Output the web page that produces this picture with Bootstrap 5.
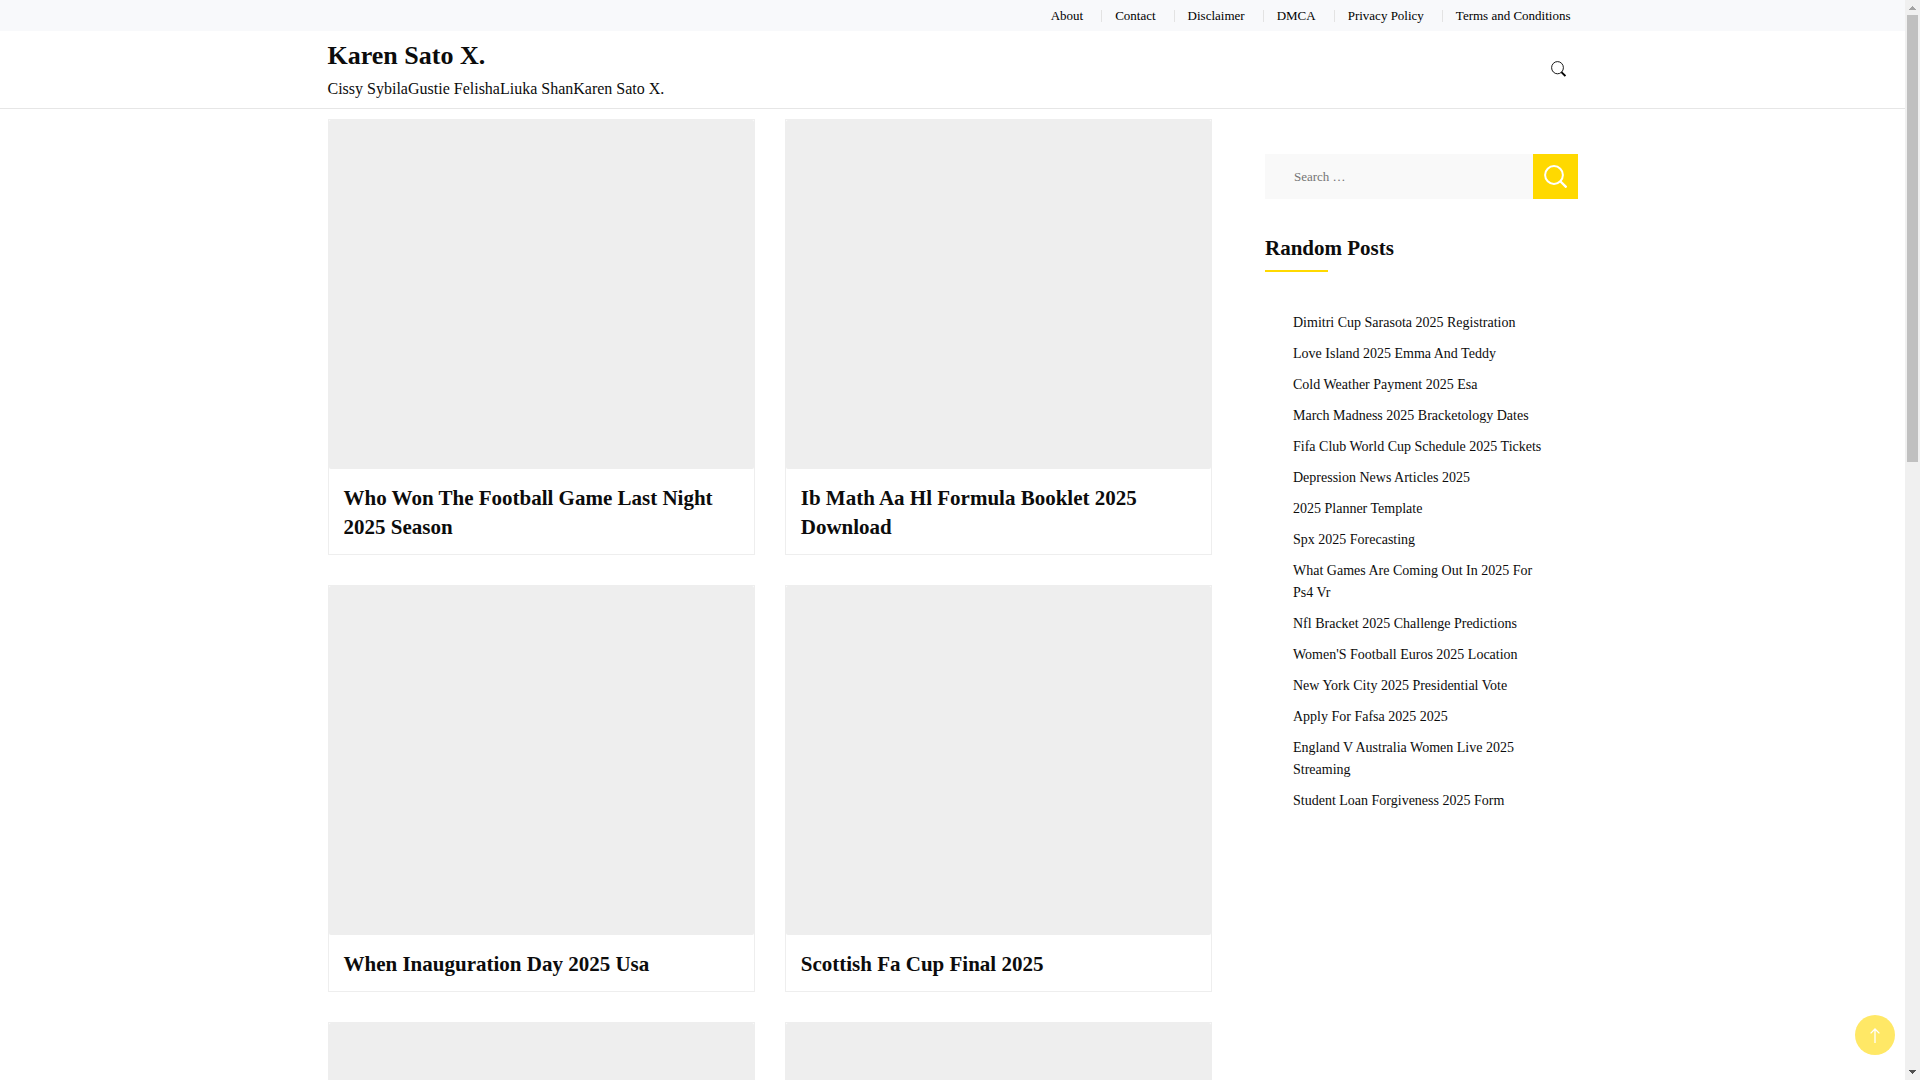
<!DOCTYPE html>
<html lang="en">
<head>
<meta charset="utf-8">
<meta name="viewport" content="width=device-width, initial-scale=1">
<title>Karen Sato X.</title>
<link href="https://cdn.jsdelivr.net/npm/bootstrap@5.3.0/dist/css/bootstrap.min.css" rel="stylesheet">
<style>
  html, body { height: 100%; overflow: hidden; }
  body { font-family: "Liberation Serif", "Times New Roman", serif; color: #0c0c0c; font-size: 16px; padding-right: 15px; background: #fff; }
  a { color: #0c0c0c; text-decoration: none; }
  a:hover { color: #c9a900; }
  .site-width { max-width: 1280px; padding-left: 15px; padding-right: 15px; }
  .top-strip { background: #f8f9fb; }
  .top-menu { font-size: 13px; line-height: 21px; padding: 5px 7px 5px 0; }
  .top-menu a { color: #000; }
  .top-menu li + li::before { content: ""; width: 1px; height: 12px; background: #e3e3e3; margin: 0 13px 0 18px; }
  .site-head { border-bottom: 1px solid #e6e6e6; padding: 8px 0 6px; }
  .site-name { font-size: 26px; line-height: 34px; font-weight: 700; }
  .tagline { line-height: 27px; padding-top: 2px; }
  .head-search { padding: 0 12px 1px; line-height: 0; color: #000; }
  .page-gap { gap: 53px; padding-top: 10px; }
  .post-row { --bs-gutter-x: 30px; --bs-gutter-y: 30px; }
  .post-card { border: 1px solid #eee; border-radius: 0; }
  .thumb { height: 349px; background: #eee; border-radius: 2px; }
  .post-title { font-size: 21px; line-height: 29px; font-weight: 700; padding: 15px 15px 12px; }
  .side-col { padding-top: 35px; }
  .find-box { font-size: 13px; height: 45px; border: 0; border-radius: 0; background: #f9f9f9; padding: 0 29px; }
  .find-box::placeholder { color: #757575; }
  .find-btn { width: 45px; height: 45px; border: 0; border-radius: 0; background: #ffd900; line-height: 0; }
  .side-title { font-size: 21px; line-height: 30px; font-weight: 700; margin-top: 34px; }
  .side-title::after { content: ""; display: block; width: 20%; height: 2px; background: #ffd900; margin-top: 7px; }
  .random-list { font-size: 14px; line-height: 22px; gap: 9px; padding: 0 28px; margin-top: 40px; }
  .to-top { right: 25px; bottom: 25px; width: 40px; height: 40px; background: #ffd900; opacity: .6; border: 0; line-height: 0; }
  .scroll-track { width: 15px; background: #f0f0f0; }
  .scroll-thumb { width: 11px; height: 447px; background: #c0c0c0; }
  .scroll-arrow { width: 15px; height: 15px; }
</style>
<script src="https://cdn.jsdelivr.net/npm/bootstrap@5.3.0/dist/js/bootstrap.bundle.min.js"></script>
</head>
<body>
<nav class="top-strip" aria-label="Top menu">
  <div class="container-fluid site-width">
    <ul class="top-menu list-unstyled d-flex flex-wrap justify-content-end mb-0">
      <li class="d-flex align-items-center"><a href="#">About</a></li>
      <li class="d-flex align-items-center"><a href="#">Contact</a></li>
      <li class="d-flex align-items-center"><a href="#">Disclaimer</a></li>
      <li class="d-flex align-items-center"><a href="#">DMCA</a></li>
      <li class="d-flex align-items-center"><a href="#">Privacy Policy</a></li>
      <li class="d-flex align-items-center"><a href="#">Terms and Conditions</a></li>
    </ul>
  </div>
</nav>
<header class="site-head">
  <div class="container-fluid site-width d-flex justify-content-between align-items-center">
    <div>
      <h1 class="site-name mb-0"><a href="#">Karen Sato X.</a></h1>
      <p class="tagline mb-0">Cissy SybilaGustie FelishaLiuka ShanKaren Sato X.</p>
    </div>
    <button type="button" class="head-search border-0 bg-transparent" aria-label="Open search">
      <svg width="15" height="18" viewBox="0 0 15 18" fill="none" stroke="currentColor"><ellipse cx="6.500" cy="6.700" rx="5.900" ry="6.100" stroke-width=".9"/><path d="M10.400 11.100l4 4" stroke-width="1.900"/></svg>
    </button>
  </div>
</header>
<div class="container-fluid site-width d-flex page-gap">
  <main class="flex-fill">
    <div class="row post-row">
      <div class="col-6"><article class="card post-card"><div class="thumb"></div><h2 class="post-title mb-0"><a href="#">Who Won The Football Game Last Night 2025 Season</a></h2></article></div>
      <div class="col-6"><article class="card post-card"><div class="thumb"></div><h2 class="post-title mb-0"><a href="#">Ib Math Aa Hl Formula Booklet 2025 Download</a></h2></article></div>
      <div class="col-6"><article class="card post-card"><div class="thumb"></div><h2 class="post-title mb-0"><a href="#">When Inauguration Day 2025 Usa</a></h2></article></div>
      <div class="col-6"><article class="card post-card"><div class="thumb"></div><h2 class="post-title mb-0"><a href="#">Scottish Fa Cup Final 2025</a></h2></article></div>
      <div class="col-6"><article class="card post-card"><div class="thumb"></div></article></div>
      <div class="col-6"><article class="card post-card"><div class="thumb"></div></article></div>
    </div>
  </main>
  <aside class="side-col w-25 flex-shrink-0">
    <form class="d-flex" role="search">
      <input type="search" class="form-control find-box" placeholder="Search …" aria-label="Search for">
      <button type="submit" class="find-btn flex-shrink-0 p-0" aria-label="Search">
        <svg width="23" height="23" viewBox="0 0 23 23" fill="none" stroke="#fff" stroke-width="2"><circle cx="10" cy="10" r="8.900"/><path d="M16.300 16.300l6.200 6.200" stroke-width="2.300"/></svg>
      </button>
    </form>
    <h2 class="side-title mb-0">Random Posts</h2>
    <ul class="random-list list-unstyled d-flex flex-column">
      <li><a href="#">Dimitri Cup Sarasota 2025 Registration</a></li>
      <li><a href="#">Love Island 2025 Emma And Teddy</a></li>
      <li><a href="#">Cold Weather Payment 2025 Esa</a></li>
      <li><a href="#">March Madness 2025 Bracketology Dates</a></li>
      <li><a href="#">Fifa Club World Cup Schedule 2025 Tickets</a></li>
      <li><a href="#">Depression News Articles 2025</a></li>
      <li><a href="#">2025 Planner Template</a></li>
      <li><a href="#">Spx 2025 Forecasting</a></li>
      <li><a href="#">What Games Are Coming Out In 2025 For Ps4 Vr</a></li>
      <li><a href="#">Nfl Bracket 2025 Challenge Predictions</a></li>
      <li><a href="#">Women'S Football Euros 2025 Location</a></li>
      <li><a href="#">New York City 2025 Presidential Vote</a></li>
      <li><a href="#">Apply For Fafsa 2025 2025</a></li>
      <li><a href="#">England V Australia Women Live 2025 Streaming</a></li>
      <li><a href="#">Student Loan Forgiveness 2025 Form</a></li>
    </ul>
  </aside>
</div>
<button type="button" class="to-top position-fixed rounded-circle p-0" aria-label="Back to top">
  <svg width="10" height="15" viewBox="0 0 10 15" fill="none" stroke="#fff" stroke-width="1.300"><path d="M5 15V1.200M.6 5.400L5 1l4.400 4.400"/></svg>
</button>
<div class="scroll-track position-fixed top-0 end-0 bottom-0 d-flex flex-column align-items-center justify-content-between" aria-hidden="true">
  <div class="d-flex flex-column align-items-center">
    <svg class="scroll-arrow" viewBox="0 0 15 15" shape-rendering="crispEdges"><path d="M4 10h7v-1h-1v-1h-1v-1h-1v-1h-1v1h-1v1h-1v1h-1z" fill="#a3a3a3"/></svg>
    <div class="scroll-thumb"></div>
  </div>
  <svg class="scroll-arrow" viewBox="0 0 15 15" shape-rendering="crispEdges"><path d="M4 5h7v1h-1v1h-1v1h-1v1h-1v-1h-1v-1h-1v-1h-1z" fill="#505050"/></svg>
</div>
</body>
</html>
